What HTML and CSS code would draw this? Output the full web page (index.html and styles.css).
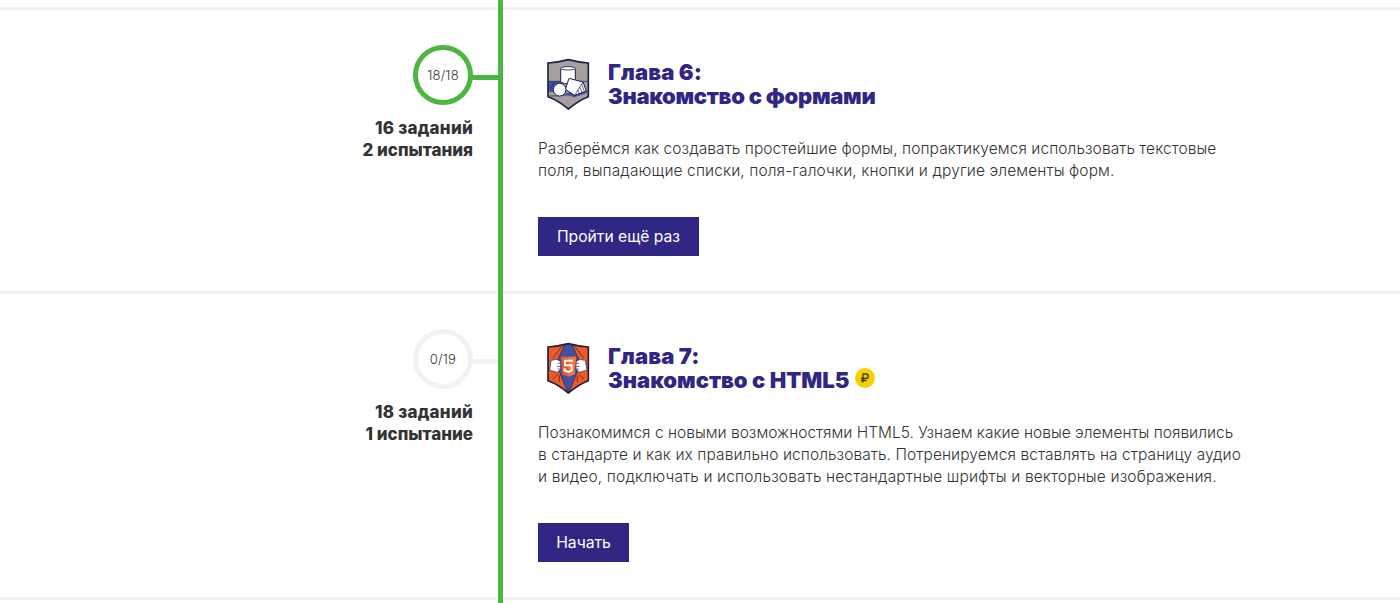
FILE: index.html
```
<!DOCTYPE html>
<html lang="ru">
<head>
<meta charset="utf-8">
<title>Главы курса</title>
<link rel="stylesheet" href="styles.css">
</head>
<body>
<main class="chapters">
  <section class="chapter chapter-done">
    <div class="progress">
      <div class="progress-row"><div class="circle">18/18</div><div class="link"></div></div>
      <p class="counts"><span class="line count-a">16 заданий</span><span class="line count-b">2 испытания</span></p>
    </div>
    <div class="content">
      <header class="heading">
        <svg class="icon" viewBox="0 0 168 180">
          <path d="M24 27Q55 25 85 17Q115 25 145 27V128Q116 139 85 165Q55 139 24 128Z" fill="#a79f9e"/>
          <path d="M26 82H62V118H26Z" fill="#414ea5"/>
          <path d="M26 113L145 121V128Q116 139 85 165Q55 139 26 128Z" fill="#a79f9e"/>
          <path d="M26 82H61M108 82H143M30 105L44 83M28 126Q80 127 143 112" fill="none" stroke="#1c2048" stroke-width="2"/>
          <path d="M72 120L103 130L141 117L132 108L84 116Z" fill="#414ea5"/>
          <path d="M62 43V84Q84 96 106 84V43" fill="#fff" stroke="#1c2048" stroke-width="3"/>
          <ellipse cx="84" cy="43" rx="22" ry="5" fill="#fff" stroke="#1c2048" stroke-width="2.5"/>
          <path d="M87 73L129 84L139 111L104 124L76 106Z" fill="#fff" stroke="#1c2048" stroke-width="3" stroke-linejoin="round"/>
          <path d="M129 84L104 124M125 91L133 112M119 99L126 115M113 108L118 118" fill="none" stroke="#1c2048" stroke-width="2"/>
          <circle cx="59" cy="107" r="19" fill="#fff" stroke="#1c2048" stroke-width="3"/>
          <path d="M24 27Q55 25 85 17Q115 25 145 27V128Q116 139 85 165Q55 139 24 128Z" fill="none" stroke="#1c2048" stroke-width="5"/>
        </svg>
        <h2 class="title"><span class="line title-num">Глава 6:</span><span class="line title-forms">Знакомство с формами</span></h2>
      </header>
      <p class="text"><span class="line t1">Разберёмся как создавать простейшие формы, попрактикуемся использовать текстовые</span><span class="line t2">поля, выпадающие списки, поля-галочки, кнопки и другие элементы форм.</span></p>
      <a class="button button-again">Пройти ещё раз</a>
    </div>
  </section>
  <section class="chapter chapter-new">
    <div class="progress">
      <div class="progress-row"><div class="circle">0/19</div><div class="link"></div></div>
      <p class="counts"><span class="line count-a">18 заданий</span><span class="line count-c">1 испытание</span></p>
    </div>
    <div class="content">
      <header class="heading">
        <svg class="icon" viewBox="0 0 168 180">
          <path d="M24 27Q55 25 85 17Q115 25 145 27V128Q116 139 85 165Q55 139 24 128Z" fill="#f15a24"/>
          <path d="M74 20L85 17L96 20L108 46L118 68L110 106L88 160H82L60 106L52 68L62 46Z" fill="#434fa3" stroke="#1c2048" stroke-width="2"/>
          <path d="M66 24L47 50M104 24L123 50M38 60L47 50M132 60L123 50M54 108L38 124M116 108L132 124M58 112L58 132M112 112L112 132" fill="none" stroke="#1c2048" stroke-width="2"/>
          <path d="M33 67L51 64L62 71V94L52 103L29 97Z" fill="#fff" stroke="#1c2048" stroke-width="2" stroke-linejoin="round"/>
          <path d="M136 67L119 64L108 71V94L118 103L141 97Z" fill="#fff" stroke="#1c2048" stroke-width="2" stroke-linejoin="round"/>
          <path d="M53 76H62M51 85H61M53 93H61M117 76H108M119 85H109M117 93H109" stroke="#1c2048" stroke-width="2"/>
          <path d="M63 56H108L104 109L85 116L67 109Z" fill="#ef5a2b"/>
          <path d="M85 56H108L104 109L85 116Z" fill="#f4733f"/>
          <path d="M99 68H75V82H95V98L85 102L74 98V91" fill="none" stroke="#fff" stroke-width="6"/>
          <path d="M24 27Q55 25 85 17Q115 25 145 27V128Q116 139 85 165Q55 139 24 128Z" fill="none" stroke="#1c2048" stroke-width="5"/>
        </svg>
        <h2 class="title"><span class="line title-num">Глава 7:</span><span class="line title-row"><span class="title-html">Знакомство с HTML5</span><svg class="ruble" viewBox="0 0 20 20"><circle cx="10" cy="10" r="10" fill="#f8d000"/><path d="M8 14.5V6H11A2.2 2.2 0 0 1 11 10.5H6M6 12.7H11.5" fill="none" stroke="#333" stroke-width="1.3"/></svg></span></h2>
      </header>
      <p class="text"><span class="line t3">Познакомимся с новыми возможностями HTML5. Узнаем какие новые элементы появились</span><span class="line t4">в стандарте и как их правильно использовать. Потренируемся вставлять на страницу аудио</span><span class="line t5">и видео, подключать и использовать нестандартные шрифты и векторные изображения.</span></p>
      <a class="button button-start">Начать</a>
    </div>
  </section>
  <div class="tail"></div>
</main>
</body>
</html>
```
FILE: styles.css
```
* { box-sizing: border-box; }
body { margin: 0; background: #fff; color: #333; font-family: Inter, "Open Sans", sans-serif; overflow: hidden; }
.chapters { height: 603px; padding-top: 7px; background: linear-gradient(#4eb543, #4eb543) 498px 0 / 5px 100% no-repeat; }
.chapter { display: grid; grid-template-columns: 498px 1fr; column-gap: 5px; }
.progress, .content { border-top: 3px solid #f2f2f2; }
.chapter-done { height: 284px; }
.chapter-new { height: 306px; }
.tail { height: 3px; background: linear-gradient(90deg, #f2f2f2 498px, #4eb543 498px, #4eb543 503px, #f2f2f2 503px); }
.line { display: block; width: max-content; white-space: nowrap; }
.progress { padding-top: 35px; }
.progress-row { display: flex; justify-content: flex-end; }
.circle { display: flex; align-items: center; justify-content: center; width: 60px; height: 60px; border: 5px solid #4eb543; border-radius: 50%; font-size: 13px; font-weight: 300; letter-spacing: 0.2px; padding-bottom: 1px; }
.link { width: 26px; height: 5px; margin: 30px 0 0 -1px; background: #4eb543; }
.chapter-new .circle { border-color: #f2f2f2; }
.chapter-new .link { background: #f2f2f2; }
.counts { display: flex; flex-direction: column; align-items: flex-end; margin: 12px 25px 0 0; font-size: 17px; line-height: 22px; font-weight: 800; }
.count-a { letter-spacing: 0.25px; }
.content { padding: 48px 0 0 35px; }
.heading { display: flex; height: 77px; }
.icon { width: 56px; height: 60px; margin: -4px 12px 0 2px; flex: none; }
.title { margin: 2px 0 0; color: #302683; font-size: 22px; line-height: 24px; font-weight: 900; }
.title-num { letter-spacing: 0.1px; }
.title-forms { letter-spacing: -0.3px; }
.title-html { letter-spacing: 0; width: 242px; }
.title-row { display: flex; gap: 5px; }
.ruble { width: 20px; height: 20px; }
.text { margin: 3px 0 35px; font-size: 15.5px; line-height: 22px; font-weight: 300; }
.t1 { letter-spacing: 0.08px; }
.t2 { letter-spacing: 0.11px; }
.t3 { letter-spacing: 0.01px; }
.t4 { letter-spacing: 0.09px; }
.t5 { letter-spacing: 0.15px; }
.button { display: flex; align-items: center; justify-content: center; height: 39px; padding-bottom: 1px; background: #302683; color: #fff; font-size: 15.7px; font-weight: 400; }
.button-again { width: 161px; }
.button-start { width: 91px; }
```
